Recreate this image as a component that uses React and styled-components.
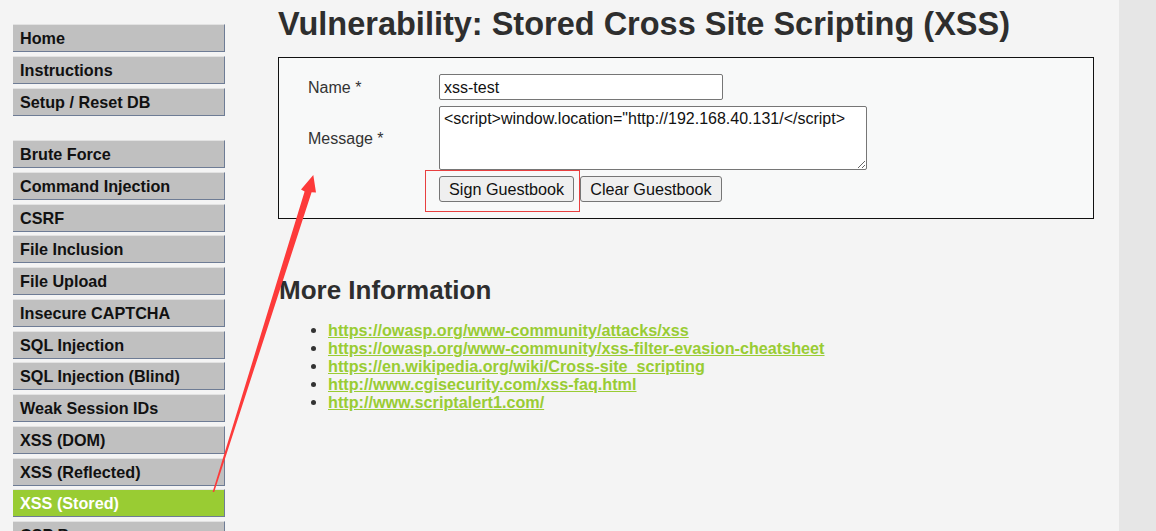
import React from "react";
import styled, { createGlobalStyle } from "styled-components";

const GlobalStyle = createGlobalStyle`
  html, body {
    margin: 0;
    padding: 0;
    background: #f4f4f4;
    font-family: "Liberation Sans", Arial, sans-serif;
    overflow: hidden;
  }
`;

const Page = styled.div`
  display: flex;
  width: 1156px;
  height: 531px;
  position: relative;
  overflow: hidden;
`;

const Content = styled.div`
  display: flex;
  width: 1119px;
  height: 531px;
`;

const ScrollTrack = styled.div`
  width: 37px;
  height: 531px;
  background: #e6e6e6;
`;

const Sidebar = styled.nav`
  width: 212px;
  padding: 24px 0 0 13px;
  flex-shrink: 0;
`;

const MenuGroup = styled.ul`
  list-style: none;
  margin: 0 0 24.5px 0;
  padding: 0;
`;

const MenuItem = styled.li`
  box-sizing: border-box;
  height: 28px;
  margin-bottom: 3.75px;
  padding: 1px 0 0 7px;
  display: flex;
  align-items: center;
  background: ${(p) => (p.$active ? "#99cc33" : "#c0c0c0")};
  color: ${(p) => (p.$active ? "#ffffff" : "#111111")};
  border-top: 1px solid #e2e2e2;
  border-right: 1px solid #6e7c95;
  border-bottom: 1px solid #6e7c95;
  font-size: 16.2px;
  font-weight: bold;
  white-space: nowrap;
`;

const Main = styled.main`
  margin-left: 53px;
  width: 816px;
`;

const Title = styled.h1`
  margin: 6px 0 14px 0;
  font-size: 32.5px;
  font-weight: bold;
  color: #2e2e2e;
  white-space: nowrap;
`;

const FormBox = styled.div`
  box-sizing: border-box;
  width: 816px;
  border: 1px solid #111;
  background: #f8f9f9;
  padding: 16px 0 16px 29px;
  display: grid;
  grid-template-columns: 131px auto;
  row-gap: 6px;
  align-items: center;
  justify-content: start;
`;

const Label = styled.label`
  padding-top: 2px;
  font-size: 16px;
  color: #333;
`;

const TextInput = styled.input`
  box-sizing: border-box;
  width: 284px;
  height: 26px;
  border: 1px solid #767676;
  border-radius: 2px;
  padding: 1px 4px 0;
  font-family: "Liberation Sans", Arial, sans-serif;
  font-size: 16px;
  color: #111;
  background: #fff;
`;

const MessageArea = styled.textarea`
  box-sizing: border-box;
  width: 428px;
  height: 64px;
  border: 1px solid #767676;
  border-radius: 2px;
  padding: 3px 4px 2px;
  font-family: "Liberation Sans", Arial, sans-serif;
  font-size: 16px;
  color: #111;
  background: #fff;
  display: block;
`;

const ButtonRow = styled.div`
  display: flex;
  gap: 6px;
`;

const Button = styled.button`
  box-sizing: border-box;
  height: 26px;
  padding: 1px 9px 0;
  border: 1px solid #767676;
  border-radius: 3px;
  background: #efefef;
  font-family: "Liberation Sans", Arial, sans-serif;
  font-size: 16.2px;
  color: #111;
`;

const SubTitle = styled.h2`
  margin: 56px 0 15px 1px;
  font-size: 26px;
  font-weight: bold;
  color: #2e2e2e;
`;

const LinkList = styled.ul`
  margin: 0;
  padding-left: 50px;
  color: #333;
  li {
    font-size: 16.2px;
    line-height: 18px;
  }
`;

const Link = styled.a`
  color: #99cc33;
  font-weight: bold;
  text-decoration: underline;
`;

const Annotation = styled.svg`
  position: absolute;
  left: 0;
  top: 0;
  pointer-events: none;
`;

const menuTop = ["Home", "Instructions", "Setup / Reset DB"];
const menuVulns = [
  "Brute Force",
  "Command Injection",
  "CSRF",
  "File Inclusion",
  "File Upload",
  "Insecure CAPTCHA",
  "SQL Injection",
  "SQL Injection (Blind)",
  "Weak Session IDs",
  "XSS (DOM)",
  "XSS (Reflected)",
  "XSS (Stored)",
  "CSP Bypass",
];

const links = [
  "https://owasp.org/www-community/attacks/xss",
  "https://owasp.org/www-community/xss-filter-evasion-cheatsheet",
  "https://en.wikipedia.org/wiki/Cross-site_scripting",
  "http://www.cgisecurity.com/xss-faq.html",
  "http://www.scriptalert1.com/",
];

export default function App() {
  return (
    <Page>
      <GlobalStyle />
      <Content>
        <Sidebar>
          <MenuGroup>
            {menuTop.map((m) => (
              <MenuItem key={m}>{m}</MenuItem>
            ))}
          </MenuGroup>
          <MenuGroup>
            {menuVulns.map((m) => (
              <MenuItem key={m} $active={m === "XSS (Stored)"}>
                {m}
              </MenuItem>
            ))}
          </MenuGroup>
        </Sidebar>

        <Main>
          <Title>Vulnerability: Stored Cross Site Scripting (XSS)</Title>

          <FormBox>
            <Label>Name *</Label>
            <TextInput defaultValue="xss-test" />
            <Label>Message *</Label>
            <MessageArea defaultValue={'<script>window.location="http://192.168.40.131/</script>'} />
            <span />
            <ButtonRow>
              <Button>Sign Guestbook</Button>
              <Button>Clear Guestbook</Button>
            </ButtonRow>
          </FormBox>

          <SubTitle>More Information</SubTitle>
          <LinkList>
            {links.map((l) => (
              <li key={l}>
                <Link href="#">{l}</Link>
              </li>
            ))}
          </LinkList>
        </Main>
      </Content>
      <ScrollTrack />

      <Annotation width="1156" height="531" viewBox="0 0 1156 531">
        <rect x="425.5" y="170.5" width="154" height="41" fill="none" stroke="#e84040" strokeWidth="1" />
        <polygon
          points="212.6,492 304.6,191.4 301,189.4 313.3,175 316,192.6 311.6,192.2 214.2,492"
          fill="#fd3a3a"
        />
      </Annotation>
    </Page>
  );
}
